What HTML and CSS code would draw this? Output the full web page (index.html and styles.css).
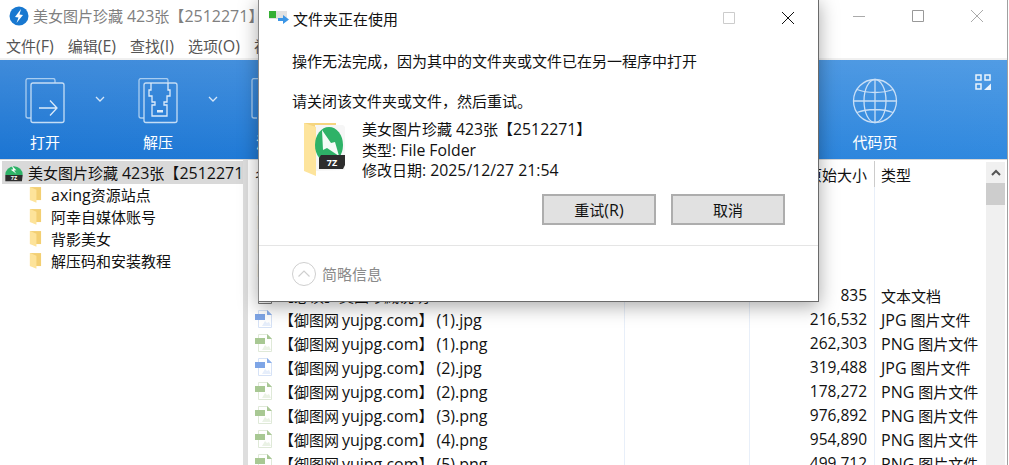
FILE: index.html
```html
<!DOCTYPE html>
<html lang="zh-CN">
<head>
  <meta charset="UTF-8" />
  <title>美女图片珍藏 423张【2512271】</title>
  <link rel="stylesheet" href="styles.css">
</head>
<body>

  <svg class="defs" width="0" height="0">
    <symbol id="folder" viewBox="0 0 14 18">
      <path d="M1 1h12v14H1z" fill="#f3cf72"/>
      <path d="M1 1l7 3v14l-7-3z" fill="#fde39a"/>
    </symbol>
    <symbol id="zip" viewBox="0 0 24 24">
      <path d="M1 15a11 11 0 0 1 22 0z" fill="#2eb267"/>
      <path d="M9 3l6 6-3 .5 3 4-7-5 3-.5z" fill="#fff"/>
      <path d="M1 15h22l-1 8H1z" fill="#2d2d2d"/>
      <text x="12" y="22" class="zip-label" text-anchor="middle">7Z</text>
    </symbol>
    <symbol id="jpg" viewBox="0 0 18 18">
      <path d="M3.500 .5h9l4 4v13h-13z" fill="#fff" stroke="#d6e2f6"/>
      <path d="M12 0l5 5h-5z" fill="#8aaeea"/>
      <path d="M7 16l3-5 2 2 2-1 2 4z" fill="#e6eefb"/>
      <rect x="0" y="4" width="10" height="6" fill="#7ea5e6"/>
    </symbol>
    <symbol id="png" viewBox="0 0 18 18">
      <path d="M3.500 .5h9l4 4v13h-13z" fill="#fff" stroke="#dfe9d8"/>
      <path d="M12 0l5 5h-5z" fill="#a9c896"/>
      <path d="M7 16l3-5 2 2 2-1 2 4z" fill="#eaf2e5"/>
      <rect x="0" y="4" width="10" height="6" fill="#a8c893"/>
    </symbol>
    <symbol id="txt" viewBox="0 0 18 18">
      <path d="M3.500 .5h9l4 4v13h-13z" fill="#fff" stroke="#777"/>
    </symbol>
  </svg>

  <div class="window">
    <div class="titlebar">
      <svg class="app-logo" width="20" height="20" viewBox="0 0 20 20">
        <circle cx="10" cy="10" r="9.500" fill="#1878d0"/>
        <path d="M12 3L6 11l3.500 .5L7.500 17l6.500-8-3.500-.5z" fill="#fff"/>
      </svg>
      <span class="app-title">美女图片珍藏 <span class="lat">423</span>张【<span class="lat">2512271</span>】</span>
      <div class="win-controls">
        <svg width="14" height="14" viewBox="0 0 14 14"><path d="M1 7.500h12" stroke="#aaa"/></svg>
        <svg width="14" height="14" viewBox="0 0 14 14"><path d="M1.500 1.500h11v11h-11z" fill="none" stroke="#999"/></svg>
        <svg width="14" height="14" viewBox="0 0 14 14"><path d="M1 1l12 12M13 1L1 13" stroke="#aaa"/></svg>
      </div>
    </div>

    <div class="menubar">
      <span>文件<span class="lat">(F)</span></span>
      <span>编辑<span class="lat">(E)</span></span>
      <span>查找<span class="lat">(I)</span></span>
      <span>选项<span class="lat">(O)</span></span>
      <span>视图<span class="lat">(V)</span></span>
    </div>

    <div class="toolbar">
      <div class="tool">
        <svg class="tool-icon" width="40" height="46" viewBox="0 0 40 46">
          <path d="M30 5V2.500a2 2 0 0 0-2-2H3a2 2 0 0 0-2 2V38a2 2 0 0 0 2 2h3" fill="none" stroke="#a9cdf0" stroke-width="1.300"/>
          <rect x="6" y="5" width="33" height="39.500" rx="2" fill="none" stroke="#c5ddf5" stroke-width="1.300"/>
          <path d="M14 30h17M25 22.500l7 7.500-7 7.500" fill="none" stroke="#dcebfa" stroke-width="1.300"/>
        </svg>
        <span class="tool-label">打开</span>
        <svg class="tool-arrow" width="10" height="6" viewBox="0 0 10 6"><path d="M1 1l4 4 4-4" fill="none" stroke="#d5e6f8" stroke-width="1.300"/></svg>
      </div>
      <div class="tool">
        <svg class="tool-icon" width="40" height="46" viewBox="0 0 40 46">
          <path d="M30 5V2.500a2 2 0 0 0-2-2H3a2 2 0 0 0-2 2V38a2 2 0 0 0 2 2h3" fill="none" stroke="#a9cdf0" stroke-width="1.300"/>
          <rect x="6" y="5" width="33" height="39.500" rx="2" fill="none" stroke="#c5ddf5" stroke-width="1.300"/>
          <path d="M13 5v7h-2v6h3v6h3v3h-3v11h15V27h-3v-3h3v-6h3v-6h-2V5" fill="none" stroke="#dcebfa" stroke-width="1.300"/>
          <rect x="19" y="32" width="6" height="2.500" fill="#dcebfa"/>
        </svg>
        <span class="tool-label">解压</span>
        <svg class="tool-arrow" width="10" height="6" viewBox="0 0 10 6"><path d="M1 1l4 4 4-4" fill="none" stroke="#d5e6f8" stroke-width="1.300"/></svg>
      </div>
      <div class="tool">
        <svg class="tool-icon" width="40" height="46" viewBox="0 0 40 46">
          <path d="M30 5V2.500a2 2 0 0 0-2-2H3a2 2 0 0 0-2 2V38a2 2 0 0 0 2 2h3" fill="none" stroke="#a9cdf0" stroke-width="1.300"/>
        </svg>
        <span class="tool-label">添加</span>
      </div>
      <div class="tool tool-last">
        <svg class="tool-icon" width="46" height="46" viewBox="0 0 46 46" fill="none" stroke="#c9dff6" stroke-width="1.300">
          <circle cx="23" cy="23" r="21.500"/>
          <ellipse cx="23" cy="23" rx="11" ry="21.500"/>
          <path d="M23 1.500v43M1.500 23h43M5 11.500c10 4 26 4 36 0M5 34.500c10-4 26-4 36 0"/>
        </svg>
        <span class="tool-label">代码页</span>
      </div>
      <svg class="layout-icon" width="16" height="16" viewBox="0 0 16 16">
        <path d="M1 1h5v5H1zM10 1h5v5h-5zM1 10h5v5H1z" fill="none" stroke="#eaf3fc" stroke-width="1.500"/>
        <path d="M16 9.500V16H9z" fill="#eaf3fc"/>
      </svg>
    </div>

    <div class="main">
      <div class="tree">
        <div class="tree-root">
          <svg width="20" height="19"><use href="#zip"/></svg>
          <span>美女图片珍藏 <span class="lat">423</span>张【<span class="lat">2512271</span>】</span>
        </div>
        <div class="tree-item"><svg width="13" height="17"><use href="#folder"/></svg><span><span class="lat">axing</span>资源站点</span></div>
        <div class="tree-item"><svg width="13" height="17"><use href="#folder"/></svg><span>阿幸自媒体账号</span></div>
        <div class="tree-item"><svg width="13" height="17"><use href="#folder"/></svg><span>背影美女</span></div>
        <div class="tree-item"><svg width="13" height="17"><use href="#folder"/></svg><span>解压码和安装教程</span></div>
      </div>

      <div class="splitter"></div>

      <div class="list">
        <div class="row list-head">
          <div class="col-name">名称</div>
          <div class="col-packed">压缩后大小</div>
          <div class="col-size">原始大小</div>
          <div class="col-type">类型</div>
        </div>
        <div class="row"><div class="col-name"><svg class="list-folder" width="13" height="17"><use href="#folder"/></svg><span>axing资源站点</span></div><div class="col-packed"></div><div class="col-size"></div><div class="col-type"></div></div>
        <div class="row"><div class="col-name"><svg class="list-folder" width="13" height="17"><use href="#folder"/></svg><span>阿幸自媒体账号</span></div><div class="col-packed"></div><div class="col-size"></div><div class="col-type"></div></div>
        <div class="row"><div class="col-name"><svg class="list-folder" width="13" height="17"><use href="#folder"/></svg><span>背影美女</span></div><div class="col-packed"></div><div class="col-size"></div><div class="col-type"></div></div>
        <div class="row"><div class="col-name"><svg class="list-folder" width="13" height="17"><use href="#folder"/></svg><span>解压码和安装教程</span></div><div class="col-packed"></div><div class="col-size"></div><div class="col-type"></div></div>
        <div class="row"><div class="col-name"><svg width="18" height="18"><use href="#txt"/></svg><span>【必读】美图珍藏说明<span class="lat">.txt</span></span></div><div class="col-packed"></div><div class="col-size">835</div><div class="col-type">文本文档</div></div>
        <div class="row"><div class="col-name"><svg width="18" height="18"><use href="#jpg"/></svg><span>【御图网 <span class="lat">yujpg.com</span>】 <span class="lat">(1).jpg</span></span></div><div class="col-packed"></div><div class="col-size">216,532</div><div class="col-type"><span class="lat">JPG</span> 图片文件</div></div>
        <div class="row"><div class="col-name"><svg width="18" height="18"><use href="#png"/></svg><span>【御图网 <span class="lat">yujpg.com</span>】 <span class="lat">(1).png</span></span></div><div class="col-packed"></div><div class="col-size">262,303</div><div class="col-type"><span class="lat">PNG</span> 图片文件</div></div>
        <div class="row"><div class="col-name"><svg width="18" height="18"><use href="#jpg"/></svg><span>【御图网 <span class="lat">yujpg.com</span>】 <span class="lat">(2).jpg</span></span></div><div class="col-packed"></div><div class="col-size">319,488</div><div class="col-type"><span class="lat">JPG</span> 图片文件</div></div>
        <div class="row"><div class="col-name"><svg width="18" height="18"><use href="#png"/></svg><span>【御图网 <span class="lat">yujpg.com</span>】 <span class="lat">(2).png</span></span></div><div class="col-packed"></div><div class="col-size">178,272</div><div class="col-type"><span class="lat">PNG</span> 图片文件</div></div>
        <div class="row"><div class="col-name"><svg width="18" height="18"><use href="#png"/></svg><span>【御图网 <span class="lat">yujpg.com</span>】 <span class="lat">(3).png</span></span></div><div class="col-packed"></div><div class="col-size">976,892</div><div class="col-type"><span class="lat">PNG</span> 图片文件</div></div>
        <div class="row"><div class="col-name"><svg width="18" height="18"><use href="#png"/></svg><span>【御图网 <span class="lat">yujpg.com</span>】 <span class="lat">(4).png</span></span></div><div class="col-packed"></div><div class="col-size">954,890</div><div class="col-type"><span class="lat">PNG</span> 图片文件</div></div>
        <div class="row"><div class="col-name"><svg width="18" height="18"><use href="#png"/></svg><span>【御图网 <span class="lat">yujpg.com</span>】 <span class="lat">(5).png</span></span></div><div class="col-packed"></div><div class="col-size">499,712</div><div class="col-type"><span class="lat">PNG</span> 图片文件</div></div>
      </div>

      <div class="scrollbar">
        <div class="scroll-btn">
          <svg width="10" height="7" viewBox="0 0 10 7"><path d="M1 6l4-4 4 4" fill="none" stroke="#555" stroke-width="2"/></svg>
        </div>
        <div class="scroll-thumb"></div>
      </div>
    </div>
  </div>

  <div class="dialog">
    <div class="dialog-title">
      <svg width="20" height="14" viewBox="0 0 20 14">
        <rect x="0" y="0" width="18" height="8" fill="#e2e2e2"/>
        <rect x="0" y="0" width="7" height="7" fill="#35b034"/>
        <path d="M9 7h5V4l6 4.500L14 13v-3H9z" fill="#3c96e6"/>
      </svg>
      <span>文件夹正在使用</span>
      <div class="dialog-controls">
        <svg width="14" height="14" viewBox="0 0 14 14"><path d="M1.500 1.500h11v11h-11z" fill="none" stroke="#ccc"/></svg>
        <svg width="14" height="14" viewBox="0 0 14 14"><path d="M1 1l12 12M13 1L1 13" stroke="#111"/></svg>
      </div>
    </div>
    <div class="dialog-body">
      <p class="msg">操作无法完成，因为其中的文件夹或文件已在另一程序中打开</p>
      <p class="msg msg-second">请关闭该文件夹或文件，然后重试。</p>
      <div class="file-info">
        <svg width="44" height="56" viewBox="0 0 44 56">
          <path d="M1 2h32v46H1z" fill="#f5d57f"/>
          <path d="M12 4h28l2 2v43l-30 1z" fill="#f6f6f6"/>
          <path d="M1 2l12 4v49L1 50z" fill="#fde49c"/>
          <ellipse cx="26" cy="24" rx="14" ry="18" fill="#2eb267"/>
          <path d="M19 9l9 13 4-1 4 14-12-8-4 2z" fill="#f4fbf6"/>
          <path d="M16 37l2-3h24v10l-2 4H16z" fill="#2d2d2d"/>
          <text x="29" y="45" class="zip-label-big" text-anchor="middle">7Z</text>
        </svg>
        <div class="file-text">
          <div>美女图片珍藏 <span class="lat">423</span>张【<span class="lat">2512271</span>】</div>
          <div>类型<span class="lat">: File Folder</span></div>
          <div>修改日期<span class="lat">: 2025/12/27 21:54</span></div>
        </div>
      </div>
      <div class="dialog-buttons">
        <button>重试<span class="lat">(R)</span></button>
        <button>取消</button>
      </div>
    </div>
    <div class="dialog-foot">
      <svg width="24" height="24" viewBox="0 0 24 24" fill="none" stroke="#cfcfcf">
        <circle cx="12" cy="12" r="11.500"/>
        <path d="M6.500 14.500L12 9l5.500 5.500" stroke-width="1.200"/>
      </svg>
      <span>简略信息</span>
    </div>
  </div>

</body>
</html>
```

FILE: styles.css
```css
* {
  margin: 0;
  padding: 0;
  box-sizing: border-box;
  font-family: 'Open Sans', 'Noto Sans CJK SC', sans-serif;
}

body {
  width: 1009px;
  height: 465px;
  overflow: hidden;
  background: #fff;
  position: relative;
  font-size: 15px;
  color: #111;
}

/* latin runs sit a little larger than the CJK text around them */
.lat {
  font-size: 16px;
  line-height: 1;
}

.defs {
  position: absolute;
}

.zip-label {
  font-size: 7px;
  font-weight: 700;
  fill: #fff;
}

.zip-label-big {
  font-size: 9px;
  font-weight: 700;
  fill: #fff;
}

.window {
  width: 1008px;
  height: 465px;
  border-right: 1px solid #a0a0a0;
  display: flex;
  flex-direction: column;
}

.titlebar {
  height: 32px;
  flex: none;
  display: flex;
  align-items: center;
  padding-left: 9px;
}

.app-title {
  margin: -2px 0 0 4px;
  color: #808080;
  white-space: nowrap;
}

.win-controls {
  margin-left: auto;
  margin-right: 23px;
  display: flex;
  gap: 45px;
}

.menubar {
  height: 28px;
  flex: none;
  display: flex;
  gap: 14px;
  align-items: center;
  padding-left: 6px;
  color: #555;
  white-space: nowrap;
  border-bottom: 2px solid #f0f0f0;
}

.toolbar {
  height: 100px;
  flex: none;
  display: flex;
  background: linear-gradient(to bottom, rgba(255,255,255,.16), rgba(255,255,255,0)), linear-gradient(to right, #1b75d3, #3089df);
  border-bottom: 1px solid #d8d8d8;
  position: relative;
}

.tool {
  width: 113px;
  flex: none;
  position: relative;
  padding: 18px 0 0 25px;
}

.tool-icon {
  display: block;
}

.tool-label {
  display: block;
  width: 40px;
  margin-top: 7px;
  text-align: center;
  color: #fff;
  white-space: nowrap;
}

.tool-arrow {
  position: absolute;
  left: 95px;
  top: 36px;
}

.tool-last {
  margin-left: auto;
  width: 46px;
  margin-right: 109px;
  padding-left: 0;
}

.tool-last .tool-label {
  width: 46px;
}

.layout-icon {
  position: absolute;
  right: 16px;
  top: 14px;
}

.main {
  flex: 1;
  min-height: 0;
  display: flex;
  overflow: hidden;
}

.tree {
  width: 243px;
  flex: none;
  padding-top: 1px;
}

.tree-root {
  height: 23px;
  margin-left: 2px;
  padding-bottom: 1px;
  background: #d9d9d9;
  display: flex;
  align-items: center;
  gap: 4px;
  overflow: hidden;
  white-space: nowrap;
}

.tree-root svg {
  flex: none;
  margin-left: 2px;
}

.tree-item {
  height: 22px;
  display: flex;
  align-items: center;
  gap: 9px;
  padding-left: 29px;
  padding-bottom: 2px;
  white-space: nowrap;
}

.splitter {
  width: 5px;
  flex: none;
  background: #dedede;
}

.list {
  width: 738px;
  flex: none;
}

.row {
  height: 24px;
  display: flex;
  align-items: center;
  white-space: pre;
}

.list-head {
  height: 27px;
  padding-top: 1px;
}

.list-folder {
  margin-left: 2px;
}

.col-name {
  width: 377px;
  height: 100%;
  flex: none;
  display: flex;
  align-items: center;
  gap: 6px;
  padding-left: 7px;
  border-right: 1px solid #e8eff9;
  overflow: hidden;
  word-spacing: -1px;
}

.col-packed {
  width: 125px;
  height: 100%;
  flex: none;
  border-right: 1px solid #e8eff9;
}

.col-size {
  width: 125px;
  height: 100%;
  flex: none;
  display: flex;
  align-items: center;
  justify-content: flex-end;
  padding-right: 7px;
  border-right: 1px solid #e8eff9;
  font-size: 15.5px;
}

.list-head .col-size {
  font-size: 15px;
  border-right-color: #ccc;
}

.col-type {
  padding-left: 6px;
  flex: 1;
}

.scrollbar {
  width: 19px;
  flex: none;
  background: #f0f0f0;
  margin-top: 2px;
}

.scroll-btn {
  height: 21px;
  display: flex;
  align-items: center;
  justify-content: center;
}

.scroll-thumb {
  height: 22px;
  background: #cdcdcd;
}

.dialog {
  position: absolute;
  left: 258px;
  top: -1px;
  width: 561px;
  height: 303px;
  background: #fff;
  border: 1px solid #6a6a6a;
  border-left-color: #8a8a8a;
  box-shadow: 0 4px 18px rgba(0, 0, 0, 0.35);
  display: flex;
  flex-direction: column;
}

.dialog-title {
  height: 36px;
  flex: none;
  display: flex;
  align-items: center;
  gap: 4px;
  padding-left: 10px;
}

.dialog-controls {
  margin-left: auto;
  margin-right: 23px;
  display: flex;
  gap: 45px;
}

.dialog-body {
  flex: 1;
  border-bottom: 1px solid #e5e5e5;
  padding: 13px 32px 0 33px;
}

.msg {
  line-height: 24px;
}

.msg-second {
  margin-top: 16px;
}

.file-info {
  display: flex;
  margin: 8px 0 0 11px;
  gap: 15px;
}

.file-text {
  margin-top: -2px;
  line-height: 20.5px;
  white-space: nowrap;
}

.file-text .lat {
  font-size: 15.8px;
}

.dialog-buttons {
  display: flex;
  justify-content: flex-end;
  gap: 15px;
  margin: 13px 1px 0 0;
}

.dialog-buttons button {
  width: 114px;
  height: 31px;
  padding-top: 1px;
  font-size: 15px;
  background: #e1e1e1;
  border: 2px solid #adadad;
  color: #111;
}

.dialog-foot {
  height: 55px;
  flex: none;
  display: flex;
  align-items: center;
  gap: 6px;
  padding-left: 33px;
  color: #8a8a8a;
}
```
